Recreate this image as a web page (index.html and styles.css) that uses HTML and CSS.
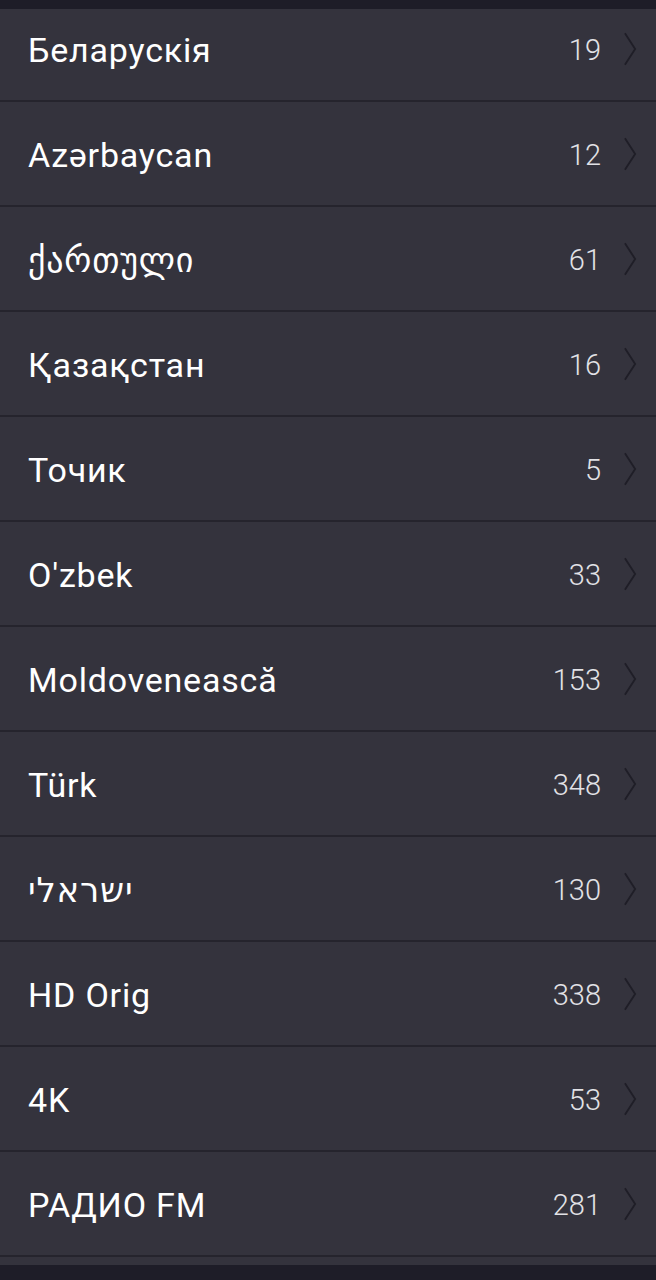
FILE: index.html
```html
<!DOCTYPE html>
<html lang="en">
<head>
    <meta charset="UTF-8">
    <meta name="viewport" content="width=device-width, initial-scale=1.0">
    <title>Categories</title>
    <link rel="stylesheet" href="styles.css">
</head>
<body>

    <div class="topbar"></div>

    <!-- Category list -->
    <div class="viewport">
        <ul class="list">
            <li class="row"><span class="name">Беларускія</span><span class="count">19</span><svg class="chev" viewBox="0 0 14 36"><path d="M1 1 L12 18 L1 35"/></svg></li>
            <li class="row"><span class="name">Azərbaycan</span><span class="count">12</span><svg class="chev" viewBox="0 0 14 36"><path d="M1 1 L12 18 L1 35"/></svg></li>
            <li class="row"><span class="name">ქართული</span><span class="count">61</span><svg class="chev" viewBox="0 0 14 36"><path d="M1 1 L12 18 L1 35"/></svg></li>
            <li class="row"><span class="name">Қазақстан</span><span class="count">16</span><svg class="chev" viewBox="0 0 14 36"><path d="M1 1 L12 18 L1 35"/></svg></li>
            <li class="row"><span class="name">Точик</span><span class="count">5</span><svg class="chev" viewBox="0 0 14 36"><path d="M1 1 L12 18 L1 35"/></svg></li>
            <li class="row"><span class="name">O'zbek</span><span class="count">33</span><svg class="chev" viewBox="0 0 14 36"><path d="M1 1 L12 18 L1 35"/></svg></li>
            <li class="row"><span class="name">Moldovenească</span><span class="count">153</span><svg class="chev" viewBox="0 0 14 36"><path d="M1 1 L12 18 L1 35"/></svg></li>
            <li class="row"><span class="name">Türk</span><span class="count">348</span><svg class="chev" viewBox="0 0 14 36"><path d="M1 1 L12 18 L1 35"/></svg></li>
            <li class="row"><span class="name">ישראלי</span><span class="count">130</span><svg class="chev" viewBox="0 0 14 36"><path d="M1 1 L12 18 L1 35"/></svg></li>
            <li class="row"><span class="name">HD Orig</span><span class="count">338</span><svg class="chev" viewBox="0 0 14 36"><path d="M1 1 L12 18 L1 35"/></svg></li>
            <li class="row"><span class="name">4K</span><span class="count">53</span><svg class="chev" viewBox="0 0 14 36"><path d="M1 1 L12 18 L1 35"/></svg></li>
            <li class="row"><span class="name">РАДИО FM</span><span class="count">281</span><svg class="chev" viewBox="0 0 14 36"><path d="M1 1 L12 18 L1 35"/></svg></li>
            <li class="row"></li>
        </ul>
    </div>

    <div class="bottombar"></div>

</body>
</html>
```

FILE: styles.css
```css
body {
    margin: 0;
    width: 656px;
    height: 1280px;
    overflow: hidden;
    background-color: #1e1d28;
    font-family: Roboto, "DejaVu Sans", sans-serif;
}
.topbar {
    height: 9px;
    background-color: #1e1d28;
}
.bottombar {
    height: 15px;
    background-color: #1e1d28;
}
/* Scrolled list area */
.viewport {
    height: 1256px;
    overflow: hidden;
    background-color: #34333d;
}
.list {
    list-style: none;
    margin: -12px 0 0 0;
    padding: 0;
}
.row {
    display: flex;
    align-items: center;
    height: 103px;
    padding: 0 19px 0 28px;
    border-bottom: 2px solid #25242d;
    background-color: #34333d;
}
.name {
    flex-grow: 1;
    color: #ffffff;
    font-size: 34px;
    letter-spacing: 0.8px;
    direction: ltr;
    unicode-bidi: plaintext;
    text-align: left;
    margin-top: 3px;
}
.count {
    color: #e2e2e6;
    font-size: 29px;
    font-weight: 300;
    margin-right: 23px;
    margin-top: 2px;
}
.chev {
    width: 13px;
    height: 36px;
    fill: none;
    stroke: #1f1e27;
    stroke-width: 2;
}
```
